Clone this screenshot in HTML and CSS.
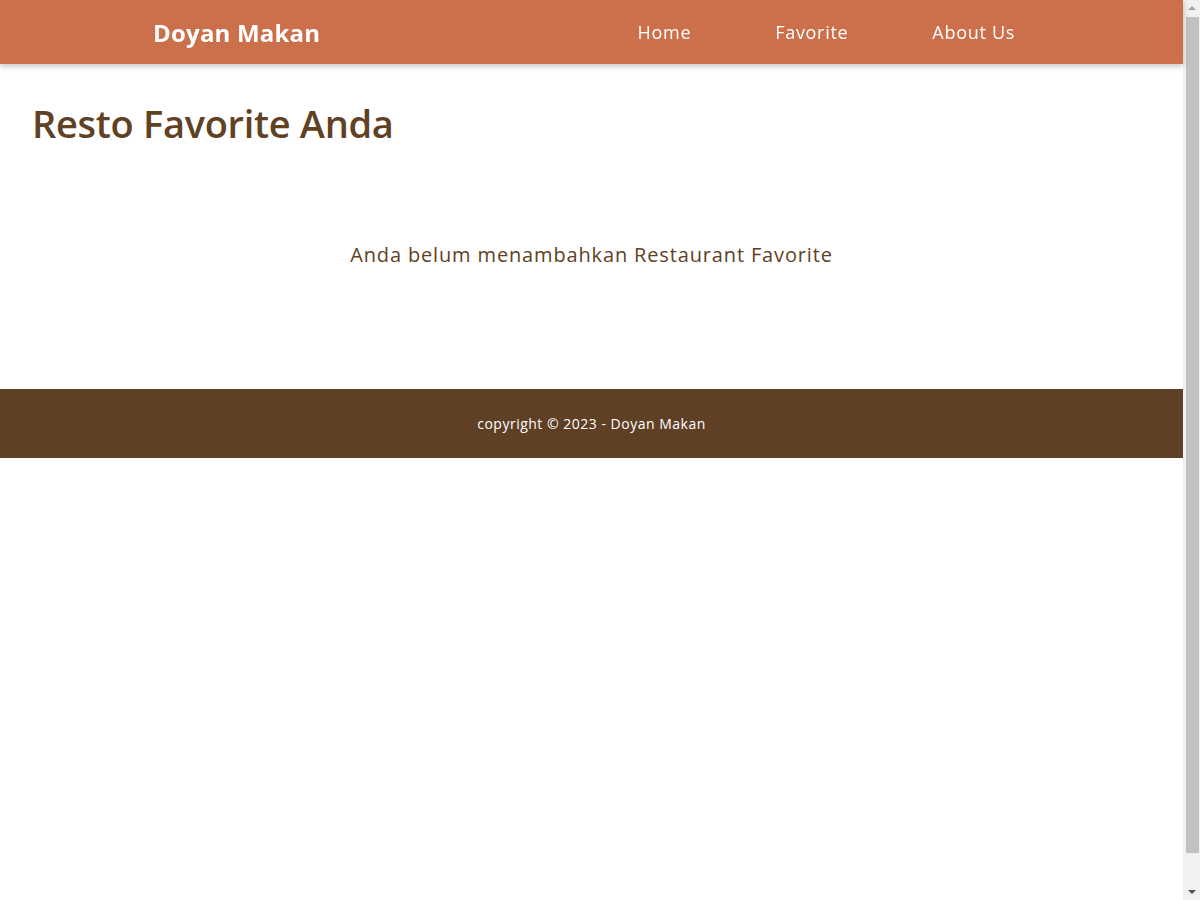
FILE: index.html
```html
<!DOCTYPE html>
<html lang="id">
<head>
<meta charset="utf-8">
<title>Doyan Makan</title>
<link rel="stylesheet" href="styles.css">
</head>
<body>
<div class="page">
  <header class="app-bar">
    <a class="brand" href="#">Doyan Makan</a>
    <nav class="nav">
      <a href="#">Home</a>
      <a href="#">Favorite</a>
      <a href="#">About Us</a>
    </nav>
  </header>
  <main class="content">
    <h1 class="title">Resto Favorite Anda</h1>
    <p class="empty">Anda belum menambahkan Restaurant Favorite</p>
  </main>
  <footer class="footer">
    <p>copyright © 2023 - Doyan Makan</p>
  </footer>
</div>
<div class="scrollbar" aria-hidden="true">
  <span class="arrow arrow-up"></span>
  <span class="thumb"></span>
  <span class="arrow arrow-down"></span>
</div>
</body>
</html>
```
FILE: styles.css
```css
* { box-sizing: border-box; }
html, body { margin: 0; padding: 0; }
body {
  font-family: "Open Sans", "Noto Sans", sans-serif;
  background: #ffffff;
  color: #614124;
}
.page {
  width: calc(100% - 17px);
  min-height: calc(100vh + 32px);
}
.app-bar {
  height: 64px;
  background: #cc704b;
  display: flex;
  align-items: center;
  justify-content: space-between;
  padding: 0 168px 0 153px;
  box-shadow: 0 2px 6px rgba(0,0,0,0.25);
  position: relative;
  z-index: 1;
}
.brand {
  color: #fff;
  text-decoration: none;
  font-weight: 700;
  font-size: 24px;
  letter-spacing: 0.2px;
}
.nav { display: flex; gap: 84px; }
.nav a {
  color: #fff;
  text-decoration: none;
  font-size: 18px;
  letter-spacing: 0.7px;
}
.content { padding: 37px 32px 0; min-height: 325px; }
.title {
  margin: 0;
  font-size: 38px;
  font-weight: 600;
  line-height: 1.2;
  letter-spacing: -0.3px;
  color: #614124;
}
.empty {
  margin: 93px 0 0;
  text-align: center;
  font-size: 20px;
  line-height: 1.5;
  letter-spacing: 0.85px;
  color: #614124;
}
.footer {
  background: #5f4025;
  height: 69px;
  display: flex;
  align-items: center;
  justify-content: center;
}
.footer p { margin: 0; color: #fff; font-size: 14px; letter-spacing: 0.5px; }

.scrollbar {
  position: fixed;
  top: 0;
  right: 0;
  width: 17px;
  height: 100vh;
  background: #f1f1f1;
  display: flex;
  flex-direction: column;
  align-items: center;
}
.arrow {
  width: 0;
  height: 0;
  border-left: 4px solid transparent;
  border-right: 4px solid transparent;
  margin: 6px 0;
}
.arrow-up { border-bottom: 4px solid #a3a3a3; }
.arrow-down { border-top: 4px solid #505050; margin-top: auto; margin-bottom: 6px; }
.thumb {
  width: 13px;
  height: 836px;
  margin-left: 2px;
  margin-top: 1px;
  background: #c1c1c1;
}
```
